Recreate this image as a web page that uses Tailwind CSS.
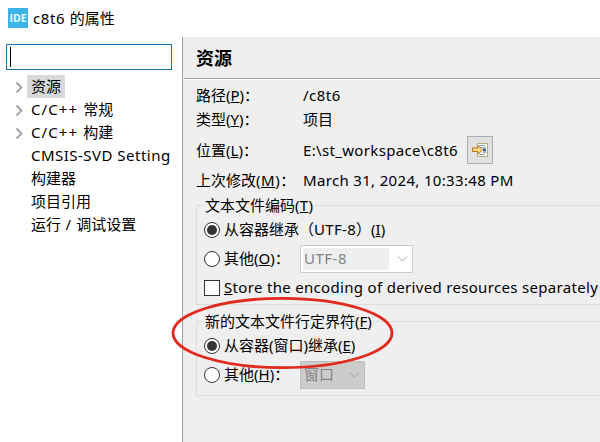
<!DOCTYPE html>
<html lang="zh-CN">
<head>
<meta charset="utf-8">
<title>c8t6 的属性</title>
<script src="https://cdn.jsdelivr.net/npm/@tailwindcss/browser@4"></script>
</head>
<body class="w-[600px] h-[442px] overflow-hidden bg-white text-black font-['Noto_Sans','Noto_Sans_CJK_SC',sans-serif] text-[15px] leading-[23px] whitespace-nowrap">
<div class="relative flex h-[442px] w-[600px] flex-col overflow-hidden">
  <header class="flex h-[37px] shrink-0 items-center pl-2">
    <div class="mb-px flex h-5 w-5 items-center justify-center bg-[#3cb4e7] text-[10.5px] font-bold leading-none text-white/90 font-['Open_Sans',sans-serif]">IDE</div>
    <h1 class="ml-[5px] text-[15px]"><span class="tracking-[0.6px]">c8t6 </span>的属性</h1>
  </header>
  <div class="flex min-h-0 flex-1">
    <aside class="w-[182px] shrink-0 pt-[7px] pl-1.5">
      <div class="flex h-[26px] w-[166px] items-center border border-[#1a6fae] pl-[3px]"><span class="h-5 w-px bg-black"></span></div>
      <ul class="mt-[5px] w-[165px] overflow-hidden">
        <li class="flex h-[23px] items-center"><svg class="ml-[9px] mr-[3px] h-3 w-[9px]" viewBox="0 0 9 12" fill="none" stroke="#a0a0a0" stroke-width="1.8"><path d="M1.5 1.5L6.5 6.5L1.5 11.5"/></svg><span class="bg-[#d9d9d9] px-1">资源</span></li>
        <li class="flex h-[23px] items-center"><svg class="ml-[9px] mr-[7px] h-3 w-[9px]" viewBox="0 0 9 12" fill="none" stroke="#a0a0a0" stroke-width="1.8"><path d="M1.5 1.5L6.5 6.5L1.5 11.5"/></svg><span><span class="tracking-[1.1px]">C/C++ </span>常规</span></li>
        <li class="flex h-[23px] items-center"><svg class="ml-[9px] mr-[7px] h-3 w-[9px]" viewBox="0 0 9 12" fill="none" stroke="#a0a0a0" stroke-width="1.8"><path d="M1.5 1.5L6.5 6.5L1.5 11.5"/></svg><span><span class="tracking-[1.1px]">C/C++ </span>构建</span></li>
        <li class="h-[23px] pl-[25px] tracking-[0.48px]">CMSIS-SVD Settings</li>
        <li class="h-[23px] pl-[25px]">构建器</li>
        <li class="h-[23px] pl-[25px]">项目引用</li>
        <li class="h-[23px] pl-[25px]">运行<span class="tracking-[0.6px]"> / </span>调试设置</li>
      </ul>
    </aside>
    <main class="flex min-w-0 flex-1 flex-col border-l border-[#a0a0a0] bg-[#efefef]">
      <h2 class="ml-px flex h-[42px] shrink-0 items-center border-b border-[#a0a0a0] pl-3 pt-[2px] text-[18px] font-bold">资源</h2>
      <div class="h-px shrink-0 bg-white"></div>
      <div class="flex flex-col pl-[13px]">
        <div class="mt-[3px] flex h-[24px] items-center"><span class="w-[107px]">路径(<u>P</u>)：</span><span class="tracking-[0.5px]">/c8t6</span></div>
        <div class="flex h-[25px] items-center"><span class="w-[107px]">类型(<u>Y</u>)：</span><span>项目</span></div>
        <div class="mt-1 flex h-7 items-center"><span class="w-[107px]">位置(<u>L</u>)：</span><span class="tracking-[0.34px]">E:\st_workspace\c8t6</span>
          <button class="ml-auto mr-[107px] flex h-7 w-[26px] items-center justify-center border border-[#adadad] bg-[#e1e1e1]">
            <svg class="h-4 w-4" viewBox="0 0 16 16"><path d="M5.5 1.5H15.5V14.5H5.5Z" fill="#fffdf2" stroke="#b4a878"/><path d="M7 3.5H13M7 5.5H14M11 10.5H14M7 12.5H13" stroke="#8fa5bd"/><path d="M11 6.5H14V9.5H11Z" fill="#39658f"/><path d="M.5 6H6V3.5L10.5 8L6 12V9.5H.5Z" fill="#ffdc85" stroke="#b9771a"/></svg>
          </button>
        </div>
        <div class="mt-[5px] flex h-[23px] items-center"><span class="w-[107px]">上次修改<span class="tracking-[0.5px]">(<u>M</u>)</span>：</span><span class="tracking-[0.33px]">March 31, 2024, 10:33:48 PM</span></div>
      </div>
      <section class="ml-[13px] mt-[13px] h-[100px] shrink-0 border-y border-l border-[#dcdcdc]">
        <h3 class="-mt-[12px] ml-1.5 h-[23px] w-fit bg-[#efefef] px-0.5">文本文件编码<span class="tracking-[0.3px]">(<u>T</u>)</span></h3>
        <div class="ml-[7px] mt-[1px] flex h-[23px] items-center"><span class="flex h-4 w-4 items-center justify-center rounded-full border border-[#333] bg-white"><i class="h-2.5 w-2.5 rounded-full bg-[#333]"></i></span><span class="ml-1">从容器继承（<span class="tracking-[0.3px]">UTF-8</span>）(<u>I</u>)</span></div>
        <div class="ml-[7px] mt-[3px] flex h-[29px] items-center"><span class="h-4 w-4 rounded-full border border-[#333] bg-white"></span><span class="ml-1 w-[76px]">其他(<u>O</u>)：</span>
          <div class="flex h-7 w-[113px] items-center border border-[#ccc] bg-white pl-0.5"><span class="flex h-[22px] w-[86px] items-center bg-[#efefef] pl-px tracking-[0.5px] text-[#838383]">UTF-8</span><svg class="ml-2 h-2 w-[11px]" viewBox="0 0 11 8" fill="none" stroke="#a0a0a0"><path d="M1 1.5L5.5 6L10 1.5"/></svg></div>
        </div>
        <div class="ml-[7px] mt-[3px] flex h-[23px] items-center"><span class="h-4 w-4 border border-[#333] bg-white"></span><span class="ml-1 tracking-[0.32px]"><u>S</u>tore the encoding of derived resources separately</span></div>
      </section>
      <section class="ml-[13px] mt-4 h-[75px] shrink-0 border-y border-l border-[#dcdcdc]">
        <h3 class="-mt-[12px] ml-1.5 h-[23px] w-fit bg-[#efefef] px-0.5">新的文本文件行定界符(<u>F</u>)</h3>
        <div class="ml-[7px] mt-[1px] flex h-[23px] items-center"><span class="flex h-4 w-4 items-center justify-center rounded-full border border-[#333] bg-white"><i class="h-2.5 w-2.5 rounded-full bg-[#333]"></i></span><span class="ml-1">从容器(窗口)继承(<u>E</u>)</span></div>
        <div class="ml-[7px] mt-[3px] flex h-[29px] items-center"><span class="h-4 w-4 rounded-full border border-[#333] bg-white"></span><span class="ml-1 w-[76px]">其他(<u>H</u>)：</span>
          <div class="flex h-7 w-[65px] items-center border border-[#bfbfbf] bg-[#ccc] pl-[3px] text-[#838383]"><span>窗口</span><svg class="ml-auto mr-[4px] h-2 w-[11px]" viewBox="0 0 11 8" fill="none" stroke="#a0a0a0"><path d="M1 1.5L5.5 6L10 1.5"/></svg></div>
        </div>
      </section>
    </main>
  </div>
  <svg class="absolute inset-0 h-[442px] w-[600px]" viewBox="0 0 600 442" fill="none"><ellipse cx="282.5" cy="333" rx="109.5" ry="34.7" stroke="#e1291d" stroke-width="2.8"/></svg>
</div>
</body>
</html>
